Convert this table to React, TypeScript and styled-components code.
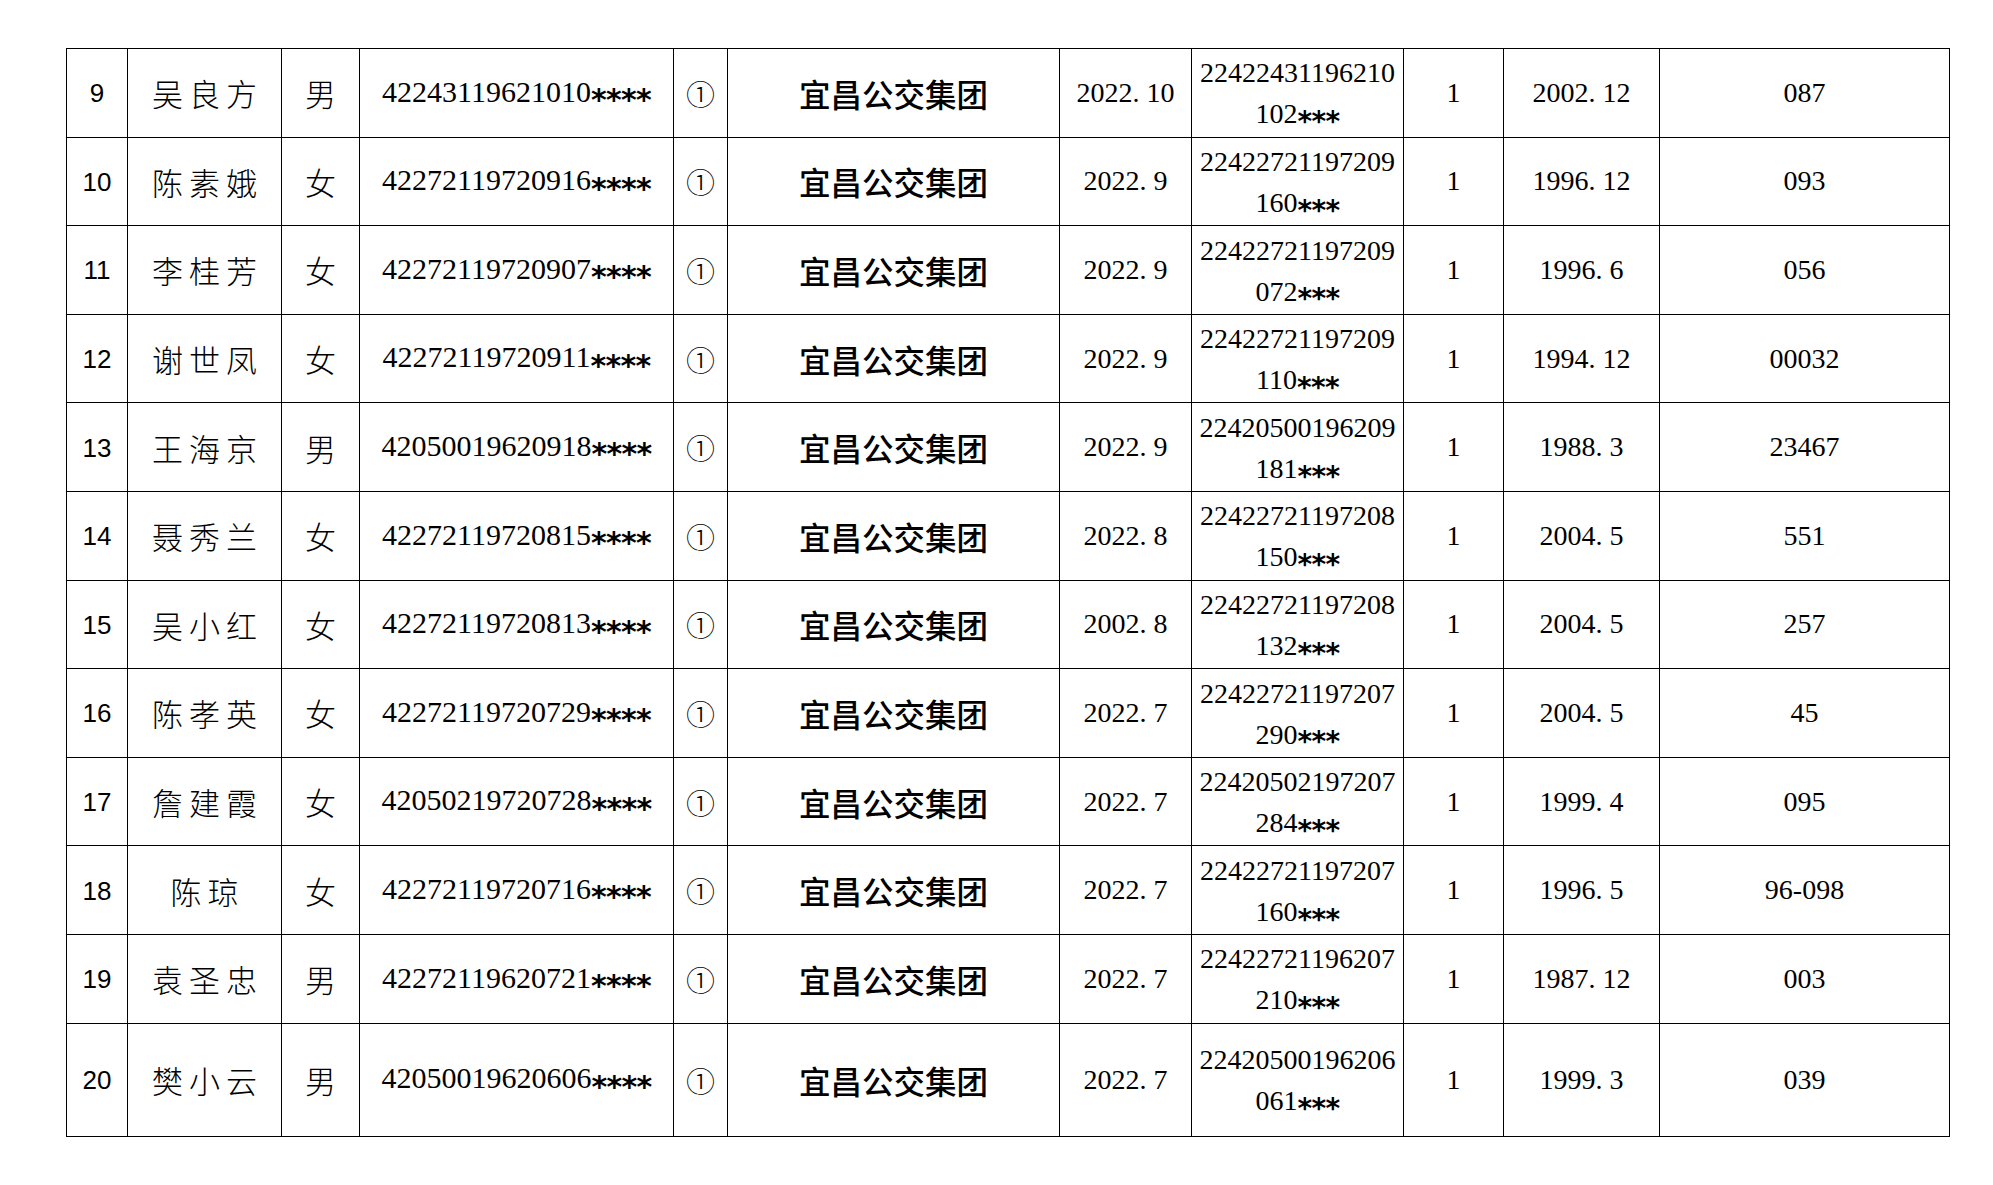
import * as React from "react"
import styled, { createGlobalStyle } from "styled-components"

interface Person {
  no: number
  name: string
  gender: string
  id: string
  date: string
  cert: string
  since: string
  code: string
}

const people: Person[] = [
  { no: 9, name: "吴良方", gender: "男", id: "42243119621010****", date: "2022.10", cert: "22422431196210102***", since: "2002.12", code: "087" },
  { no: 10, name: "陈素娥", gender: "女", id: "42272119720916****", date: "2022.9", cert: "22422721197209160***", since: "1996.12", code: "093" },
  { no: 11, name: "李桂芳", gender: "女", id: "42272119720907****", date: "2022.9", cert: "22422721197209072***", since: "1996.6", code: "056" },
  { no: 12, name: "谢世凤", gender: "女", id: "42272119720911****", date: "2022.9", cert: "22422721197209110***", since: "1994.12", code: "00032" },
  { no: 13, name: "王海京", gender: "男", id: "42050019620918****", date: "2022.9", cert: "22420500196209181***", since: "1988.3", code: "23467" },
  { no: 14, name: "聂秀兰", gender: "女", id: "42272119720815****", date: "2022.8", cert: "22422721197208150***", since: "2004.5", code: "551" },
  { no: 15, name: "吴小红", gender: "女", id: "42272119720813****", date: "2002.8", cert: "22422721197208132***", since: "2004.5", code: "257" },
  { no: 16, name: "陈孝英", gender: "女", id: "42272119720729****", date: "2022.7", cert: "22422721197207290***", since: "2004.5", code: "45" },
  { no: 17, name: "詹建霞", gender: "女", id: "42050219720728****", date: "2022.7", cert: "22420502197207284***", since: "1999.4", code: "095" },
  { no: 18, name: "陈琼", gender: "女", id: "42272119720716****", date: "2022.7", cert: "22422721197207160***", since: "1996.5", code: "96-098" },
  { no: 19, name: "袁圣忠", gender: "男", id: "42272119620721****", date: "2022.7", cert: "22422721196207210***", since: "1987.12", code: "003" },
  { no: 20, name: "樊小云", gender: "男", id: "42050019620606****", date: "2022.7", cert: "22420500196206061***", since: "1999.3", code: "039" },
]

const columnWidths = [61, 154, 78, 314, 54, 332, 132, 212, 100, 156, 290]

const GlobalStyle = createGlobalStyle`
  html, body {
    margin: 0;
    padding: 0;
    background: #fff;
  }
  body {
    font-family: "Liberation Serif", serif;
    color: #000;
  }
`

const Page = styled.div`
  padding: 48px 0 0 66px;
`

const Table = styled.table`
  border-collapse: collapse;
  table-layout: fixed;
  width: 1883px;
`

const Row = styled.tr<{ $tall?: boolean }>`
  height: ${props => props.$tall ? 113 : 88.6}px;
`

const Cell = styled.td`
  border: 1px solid #000;
  padding: 0;
  text-align: center;
  vertical-align: middle;
  white-space: nowrap;
`

const IndexCell = styled(Cell)`
  font-family: "Liberation Sans", Arial, sans-serif;
  font-size: 26px;
  padding-top: 2px;
`

const NameCell = styled(Cell)`
  font-family: "Noto Sans CJK SC", sans-serif;
  font-weight: 300;
  font-size: 31px;
  letter-spacing: 6px;
  padding-left: 6px;
`

const GenderCell = styled(Cell)`
  font-family: "Noto Sans CJK SC", sans-serif;
  font-weight: 300;
  font-size: 31px;
`

const SerifCell = styled(Cell)`
  font-family: "Liberation Serif", serif;
  font-size: 28px;
`

const IdCell = styled(SerifCell)`
  font-size: 30px;
  padding-top: 4px;
`

const CertCell = styled(SerifCell)`
  line-height: 41px;
  padding-top: 3px;
`

const MarkCell = styled(Cell)`
  font-family: "Noto Sans CJK SC", sans-serif;
  font-weight: 300;
  font-size: 29px;
`

const CompanyCell = styled(Cell)`
  font-family: "Noto Sans CJK SC", sans-serif;
  font-weight: 500;
  font-size: 31.5px;
`

const Star = styled.span`
  display: inline-block;
  width: 0.5em;
  font-family: "DejaVu Sans", sans-serif;
  font-weight: bold;
  line-height: 1;
  vertical-align: -0.28em;
`

const Dot = styled.span`
  display: inline-block;
  width: 0.5em;
  text-align: left;
`

function SerifText({ text }: { text: string }) {
  return <>
    {text.split("").map((ch, i) => {
      if (ch === "*") return <Star key={i}>*</Star>
      if (ch === ".") return <Dot key={i}>.</Dot>
      return ch
    })}
  </>
}

export default function App() {
  return <Page>
    <GlobalStyle />
    <Table>
      <colgroup>
        {columnWidths.map((w, i) => <col key={i} style={{ width: w }} />)}
      </colgroup>
      <tbody>
        {people.map((p, index) =>
          <Row key={p.no} $tall={index === people.length - 1}>
            <IndexCell>{p.no}</IndexCell>
            <NameCell>{p.name}</NameCell>
            <GenderCell>{p.gender}</GenderCell>
            <IdCell><SerifText text={p.id} /></IdCell>
            <MarkCell>①</MarkCell>
            <CompanyCell>宜昌公交集团</CompanyCell>
            <SerifCell><SerifText text={p.date} /></SerifCell>
            <CertCell>
              <SerifText text={p.cert.slice(0, 14)} />
              <br />
              <SerifText text={p.cert.slice(14)} />
            </CertCell>
            <SerifCell>1</SerifCell>
            <SerifCell><SerifText text={p.since} /></SerifCell>
            <SerifCell>{p.code}</SerifCell>
          </Row>
        )}
      </tbody>
    </Table>
  </Page>
}
